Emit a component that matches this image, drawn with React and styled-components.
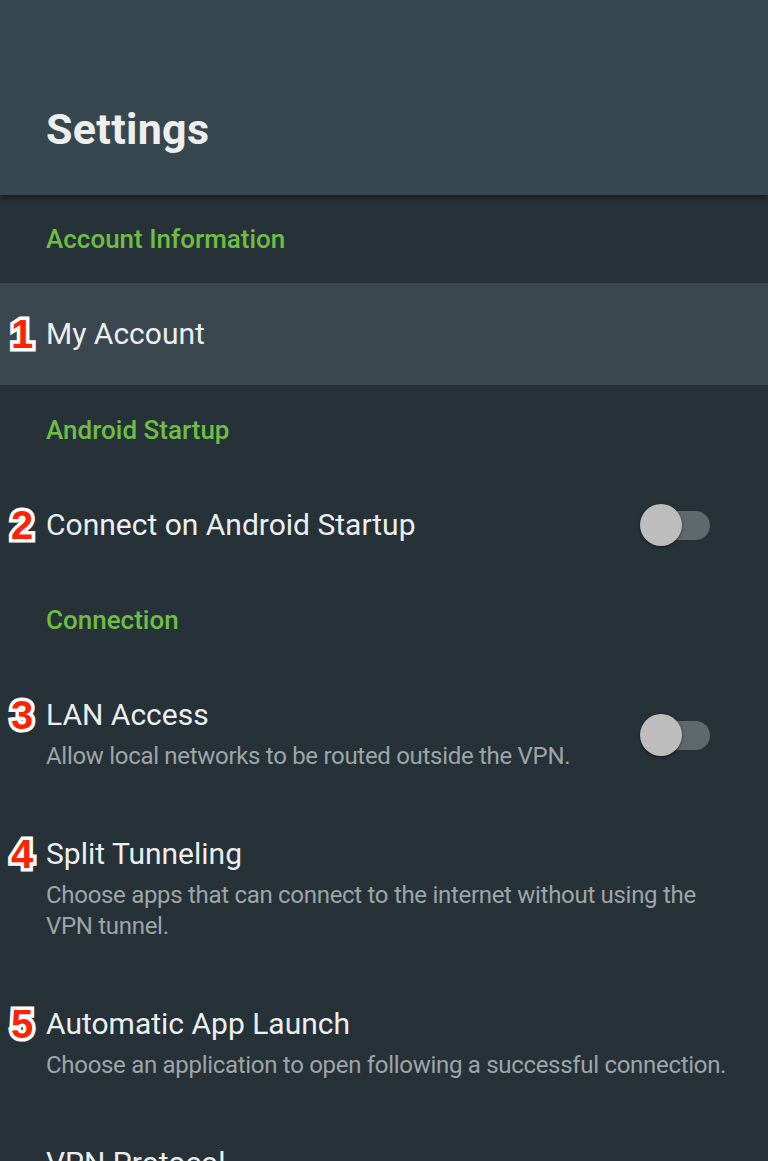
import React from 'react'
import styled, { createGlobalStyle } from 'styled-components'

const GlobalStyle = createGlobalStyle`
  html, body {
    margin: 0;
    padding: 0;
    background: #263238;
  }
  body {
    font-family: Roboto, "Noto Sans", sans-serif;
    -webkit-font-smoothing: antialiased;
  }
`;

const Page = styled.div`
  width: 768px;
  height: 1161px;
  overflow: hidden;
  background-color: #263238;
  display: flex;
  flex-direction: column;
`;

const Header = styled.header`
  height: 195px;
  flex-shrink: 0;
  background-color: #37474f;
  box-shadow: 0 3px 6px rgba(0, 0, 0, 0.45);
  display: flex;
  align-items: flex-end;
  padding: 0 46px 41px;
  box-sizing: border-box;
  position: relative;
  z-index: 1;
`;

const Title = styled.h1`
  margin: 0;
  font-size: 43px;
  font-weight: 700;
  color: #eeeeee;
  letter-spacing: 0.3px;
`;

const List = styled.div`
  display: flex;
  flex-direction: column;
`;

const SectionHeader = styled.div`
  height: ${p => p.$h || 90}px;
  display: flex;
  align-items: center;
  padding-left: 46px;
  font-size: 26px;
  font-weight: 500;
  color: #6fbe44;
`;

const Row = styled.div`
  position: relative;
  display: flex;
  align-items: center;
  padding: ${p => p.$pad || '0'} 32px ${p => p.$pad || '0'} 46px;
  min-height: ${p => p.$h || 100}px;
  box-sizing: border-box;
  background-color: ${p => (p.$active ? '#3b474e' : 'transparent')};
`;

const RowText = styled.div`
  flex: 1;
  display: flex;
  flex-direction: column;
`;

const RowTitle = styled.div`
  font-size: 30px;
  color: #eceff1;
  line-height: 36px;
`;

const RowSub = styled.div`
  font-size: 24px;
  color: #9ea5a9;
  line-height: 31px;
  margin-top: 8px;
  letter-spacing: -0.3px;
`;

const Badge = styled.span`
  position: absolute;
  left: 11px;
  top: ${p => p.$top || '50%'};
  transform: translateY(-50%);
  font-family: "Liberation Sans", Arial, sans-serif;
  font-weight: 700;
  font-size: 40px;
  line-height: 1;
  color: #ff2200;
  -webkit-text-stroke: 7px #ffffff;
  paint-order: stroke fill;
`;

const Toggle = styled.div`
  position: relative;
  width: 70px;
  height: 44px;
  margin-right: 26px;
  flex-shrink: 0;
`;

const Track = styled.div`
  position: absolute;
  left: 6px;
  right: 0;
  top: 8px;
  height: 29px;
  border-radius: 15px;
  background-color: #5e686d;
`;

const Thumb = styled.div`
  position: absolute;
  left: 0;
  top: 1px;
  width: 42px;
  height: 42px;
  border-radius: 50%;
  background-color: #bdbdbd;
  box-shadow: 0 1px 3px rgba(0, 0, 0, 0.5);
`;

const Switch = () => (
  <Toggle>
    <Track />
    <Thumb />
  </Toggle>
);

const App = () => {
  return (
    <Page>
      <GlobalStyle />
      <Header>
        <Title>Settings</Title>
      </Header>
      <List>
        <SectionHeader $h={88}>Account Information</SectionHeader>
        <Row $active $h={102}>
          <Badge>1</Badge>
          <RowText>
            <RowTitle>My Account</RowTitle>
          </RowText>
        </Row>
        <SectionHeader $h={90}>Android Startup</SectionHeader>
        <Row $h={100}>
          <Badge>2</Badge>
          <RowText>
            <RowTitle>Connect on Android Startup</RowTitle>
          </RowText>
          <Switch />
        </Row>
        <SectionHeader $h={90}>Connection</SectionHeader>
        <Row $pad="32px" $h={0}>
          <Badge $top="50px">3</Badge>
          <RowText>
            <RowTitle>LAN Access</RowTitle>
            <RowSub>Allow local networks to be routed outside the VPN.</RowSub>
          </RowText>
          <Switch />
        </Row>
        <Row $pad="32px" $h={0}>
          <Badge $top="50px">4</Badge>
          <RowText>
            <RowTitle>Split Tunneling</RowTitle>
            <RowSub>Choose apps that can connect to the internet without using the VPN tunnel.</RowSub>
          </RowText>
        </Row>
        <Row $pad="32px" $h={0}>
          <Badge $top="50px">5</Badge>
          <RowText>
            <RowTitle>Automatic App Launch</RowTitle>
            <RowSub>Choose an application to open following a successful connection.</RowSub>
          </RowText>
        </Row>
        <Row $pad="32px" $h={0}>
          <RowText>
            <RowTitle>VPN Protocol</RowTitle>
          </RowText>
        </Row>
      </List>
    </Page>
  )
}

export default App
